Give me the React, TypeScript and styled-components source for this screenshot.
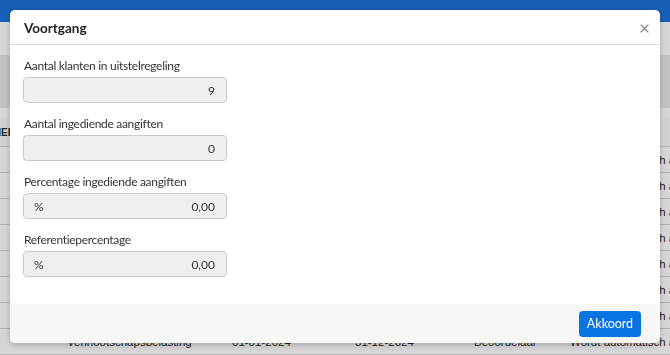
import styled, { createGlobalStyle } from "styled-components";

const GlobalStyle = createGlobalStyle`
  html, body {
    margin: 0;
    padding: 0;
    height: 100%;
    overflow: hidden;
    font-family: "Lato", "Open Sans", sans-serif;
  }
  * {
    box-sizing: border-box;
  }
`;

// background page (dimmed by the overlay)

const Page = styled.div`
  height: 100vh;
  background: #ffffff;
  display: flex;
  flex-direction: column;
  overflow: hidden;
`;

const NavBar = styled.div`
  height: 22px;
  flex-shrink: 0;
  background: #1f72d9;
`;

const SubBar = styled.div`
  height: 33px;
  flex-shrink: 0;
  background: #ffffff;
`;

const ToolBar = styled.div`
  height: 53px;
  flex-shrink: 0;
  background: #e8e8e8;
`;

const TableWrap = styled.div`
  padding-top: 10px;
  margin-left: -72px;
  font-family: "Liberation Sans", Arial, sans-serif;
`;

interface IRow {
  head?: boolean;
}
const Row = styled.div<IRow>`
  display: grid;
  grid-template-columns: 131px 165px 123px 119px 96px 1fr;
  align-items: center;
  height: ${(props) => (props.head ? "29px" : "26px")};
  background: ${(props) => (props.head ? "#fafafa" : "#ffffff")};
  border-bottom: 1px solid #d3d3d3;
  font-size: ${(props) => (props.head ? "10px" : "11.5px")};
  font-weight: ${(props) => (props.head ? 700 : 400)};
  text-transform: ${(props) => (props.head ? "uppercase" : "none")};
  color: #2b2b2b;
  > span {
    padding-left: 8px;
    white-space: nowrap;
    overflow: hidden;
  }
`;

const BottomLine = styled.div`
  height: 4px;
  background: #5c96e0;
`;

// modal

const Overlay = styled.div`
  position: fixed;
  inset: 0;
  background: rgba(0, 0, 0, 0.16);
  display: flex;
  justify-content: center;
  align-items: flex-start;
  padding-top: 10px;
`;

const Modal = styled.div`
  width: 650px;
  height: 333px;
  background: #ffffff;
  border-radius: 5px;
  box-shadow: 0 2px 6px rgba(0, 0, 0, 0.22);
  display: flex;
  flex-direction: column;
  overflow: hidden;
`;

const ModalHeader = styled.header`
  height: 35px;
  flex-shrink: 0;
  display: flex;
  align-items: center;
  justify-content: space-between;
  padding: 2px 11px 0 14px;
  border-bottom: 1px solid #dedede;
  > h2 {
    margin: 0;
    font-size: 13.5px;
    font-weight: 700;
    color: #222222;
  }
`;

const CloseBtn = styled.button`
  border: none;
  background: none;
  padding: 0;
  width: 9px;
  height: 9px;
  display: flex;
  cursor: pointer;
`;

const ModalBody = styled.div`
  flex: 1;
  display: flex;
  flex-direction: column;
  gap: 12px;
  padding: 12px 13px 0;
`;

const Field = styled.div`
  display: flex;
  flex-direction: column;
  gap: 2px;
  > label {
    height: 18px;
    line-height: 18px;
    font-size: 12px;
    letter-spacing: -0.3px;
    color: #333333;
    padding-left: 1px;
  }
`;

const InputBox = styled.div`
  width: 204px;
  height: 26px;
  display: flex;
  align-items: center;
  justify-content: space-between;
  padding: 0 11px 0 10px;
  background: #efefef;
  border: 1px solid #c9c9c9;
  border-radius: 4px;
  font-size: 12px;
  color: #333333;
  > span:last-child {
    margin-left: auto;
  }
`;

const ModalFooter = styled.footer`
  height: 39px;
  flex-shrink: 0;
  display: flex;
  align-items: center;
  justify-content: flex-end;
  padding: 0 19px;
  background: #f7f7f6;
`;

const OkBtn = styled.button`
  width: 62px;
  height: 26px;
  border: none;
  border-radius: 4px;
  background: #0b74e3;
  color: #ffffff;
  font-family: "Lato", sans-serif;
  font-size: 12.5px;
  font-weight: 400;
  cursor: pointer;
`;

const rows = [
  ["100231", "Vennootschapsbelasting", "01-01-2024", "31-12-2024", "Beoordelaar", "Wordt automatisch aangemaakt"],
];

interface IField {
  label: string;
  value: string;
  unit?: string;
}

const fields: IField[] = [
  { label: "Aantal klanten in uitstelregeling", value: "9" },
  { label: "Aantal ingediende aangiften", value: "0" },
  { label: "Percentage ingediende aangiften", value: "0,00", unit: "%" },
  { label: "Referentiepercentage", value: "0,00", unit: "%" },
];

function App() {
  const tableRows = Array.from({ length: 8 }, () => rows[0]);
  return (
    <>
      <GlobalStyle />
      <Page>
        <NavBar />
        <SubBar />
        <ToolBar />
        <TableWrap>
          <Row head>
            <span>Klantnummer</span>
            <span>Belastingsoort</span>
            <span>Begindatum</span>
            <span>Einddatum</span>
            <span>Status</span>
            <span>Opmerking</span>
          </Row>
          {tableRows.map((r, i) => (
            <Row key={i}>
              {r.map((c, j) => (
                <span key={j}>{j === 0 ? "" : c}</span>
              ))}
            </Row>
          ))}
          <BottomLine />
        </TableWrap>
      </Page>
      <Overlay>
        <Modal>
          <ModalHeader>
            <h2>Voortgang</h2>
            <CloseBtn aria-label="Sluiten">
              <svg width="9" height="9" viewBox="0 0 9 9">
                <path d="M1 1L8 8M8 1L1 8" stroke="#8a8a8a" strokeWidth="1.2" strokeLinecap="round" />
              </svg>
            </CloseBtn>
          </ModalHeader>
          <ModalBody>
            {fields.map((f) => (
              <Field key={f.label}>
                <label>{f.label}</label>
                <InputBox>
                  {f.unit && <span>{f.unit}</span>}
                  <span>{f.value}</span>
                </InputBox>
              </Field>
            ))}
          </ModalBody>
          <ModalFooter>
            <OkBtn>Akkoord</OkBtn>
          </ModalFooter>
        </Modal>
      </Overlay>
    </>
  );
}

export default App;
